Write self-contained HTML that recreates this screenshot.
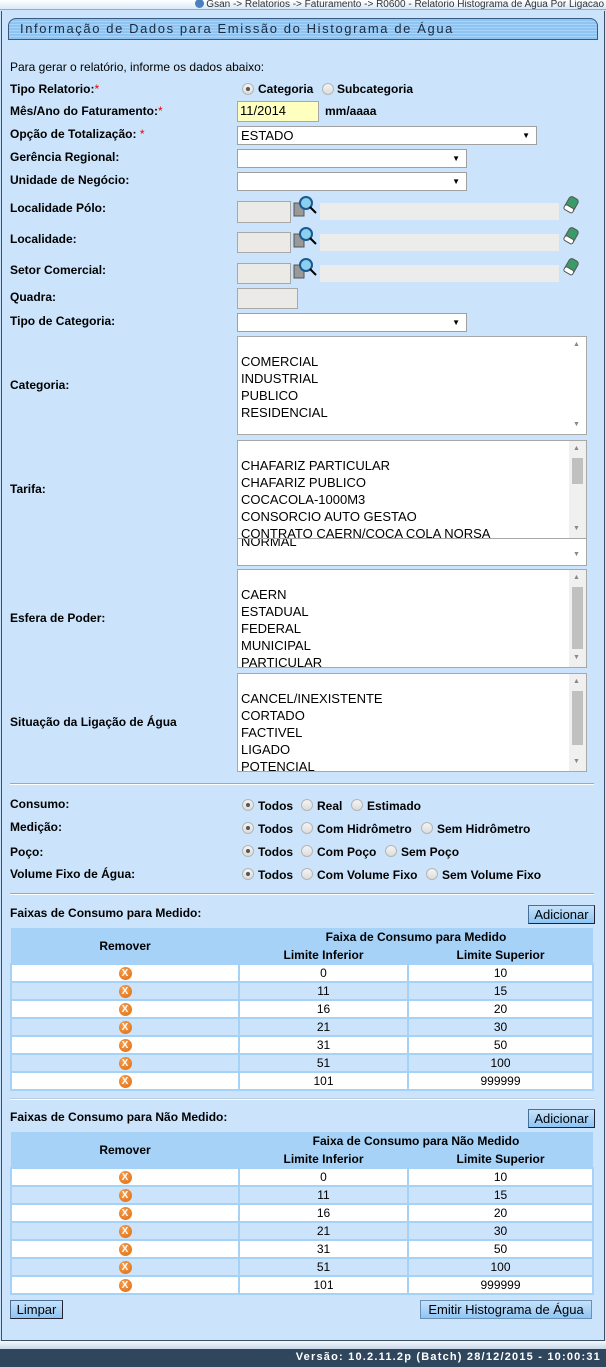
<!DOCTYPE html>
<html><head><meta charset="utf-8"><style>
*{box-sizing:border-box}
body{margin:0;width:606px;height:1367px;position:relative;background:#cbe4fb;font-family:"Liberation Sans",Arial,sans-serif;font-size:12px;color:#000;overflow:hidden}
.a{position:absolute;white-space:nowrap}
.l{position:absolute;left:10px;font-weight:bold;font-size:12px;white-space:nowrap}
.r{color:#e00;font-weight:normal}
.rad{position:absolute;width:12px;height:12px;border-radius:50%;border:1px solid #b5b5b5;background:linear-gradient(#f4f4f4,#dcdcdc)}
.rad.on::after{content:"";position:absolute;left:3px;top:3px;width:4px;height:4px;border-radius:50%;background:#555}
.rt{position:absolute;font-weight:bold;font-size:12px}
.sel{position:absolute;height:19px;background:#fff;border:1px solid #a0a0a0;font-size:13px;padding-left:3px;line-height:17px}
.sel::after{content:"▼";position:absolute;right:6px;top:0;font-size:8px}
.inp{position:absolute;background:#eceae6;border:1px solid #a8a8a8}
.lf{position:absolute;background:#ececec;height:17px}
.lb{position:absolute;left:237px;width:350px;height:99px;background:#fff;border:1px solid #a8a8a8;font-size:13px;overflow:hidden}
.lb div{position:absolute;left:3px}
.sb{position:absolute;right:0;top:0;width:17px;height:100%;background:#f0f0f0}
.sb i{position:absolute;left:3px;width:11px;background:#c0c0c0}
.up,.dn{position:absolute;left:4px;font-size:7px;color:#888}
.hr{position:absolute;left:10px;width:584px;height:2px;border-top:1px solid #9ab;border-bottom:1px solid #fff}
.btn{position:absolute;height:19px;background:linear-gradient(#c6e2fb,#8ec5f4);border:1px solid #4a6f95;border-right-color:#223;border-bottom-color:#223;font-size:13px;text-align:center;line-height:17px}
table{position:absolute;left:10px;width:584px;border-collapse:collapse;font-size:12px}
td{height:18px;text-align:center;border:2px solid #a6d2f8;padding:0;line-height:14px}
th{background:#a6d2f8;font-weight:bold;font-size:12px;padding:0;height:18px}
tr.w td{background:#fff}tr.b td{background:#cbe4fb}
.x{display:inline-block;width:13px;height:13px;border-radius:50%;background:radial-gradient(circle at 40% 35%,#f9a050,#d96a10);color:#fff;font-size:10px;font-weight:bold;line-height:13px;vertical-align:middle}
</style></head><body>
<div class="a" style="left:0;top:0;width:606px;height:10px;background:linear-gradient(#fff,#d8e8f8);border-bottom:1px solid #9ab"></div>
<div class="a" style="right:2px;top:-1px;font-size:10px;color:#333"><span style="display:inline-block;width:9px;height:9px;border-radius:50%;background:#4a7fc0;vertical-align:-1px"></span> Gsan -&gt; Relatorios -&gt; Faturamento -&gt; R0600 - Relatorio Histograma de Agua Por Ligacao</div>
<div class="a" style="left:1px;top:11px;width:604px;height:1330px;border:1px solid #3a5068;border-top:none"></div>
<div class="a" style="left:8px;top:18px;width:590px;height:22px;border:1px solid #3a5a80;border-radius:8px 8px 0 0;background:repeating-linear-gradient(#8ec4f2 0 2px,#a9d3f8 2px 3px);"></div>
<div class="a" style="left:20px;top:21px;font-size:13px;letter-spacing:1.6px;color:#1a2a40">Informação de Dados para Emissão do Histograma de Água</div>

<div class="a" style="left:10px;top:60px;font-size:12px">Para gerar o relatório, informe os dados abaixo:</div>
<div class="l" style="top:82px">Tipo Relatorio:<span class="r">*</span></div>
<div class="rad on" style="left:242px;top:83px"></div><div class="rt" style="left:258px;top:82px">Categoria</div>
<div class="rad" style="left:322px;top:83px"></div><div class="rt" style="left:337px;top:82px">Subcategoria</div>
<div class="l" style="top:104px">Mês/Ano do Faturamento:<span class="r">*</span></div>
<div class="a" style="left:237px;top:101px;width:82px;height:21px;background:#ffffc0;border:1px solid #a8a8a8;font-size:13px;padding:1px 2px">11/2014</div>
<div class="rt" style="left:325px;top:104px">mm/aaaa</div>
<div class="l" style="top:127px">Opção de Totalização: <span class="r">*</span></div>
<div class="sel" style="left:237px;top:126px;width:300px">ESTADO</div>
<div class="l" style="top:150px">Gerência Regional:</div>
<div class="sel" style="left:237px;top:149px;width:230px"></div>
<div class="l" style="top:173px">Unidade de Negócio:</div>
<div class="sel" style="left:237px;top:172px;width:230px"></div>

<div class="l" style="top:201px">Localidade Pólo:</div>
<div class="l" style="top:232px">Localidade:</div>
<div class="l" style="top:263px">Setor Comercial:</div>
<div class="inp" style="left:237px;top:201px;width:54px;height:22px"></div>
<div class="inp" style="left:237px;top:232px;width:54px;height:21px"></div>
<div class="inp" style="left:237px;top:263px;width:54px;height:21px"></div>
<div class="lf" style="left:320px;top:203px;width:239px"></div>
<div class="lf" style="left:320px;top:234px;width:239px"></div>
<div class="lf" style="left:320px;top:265px;width:239px"></div>
<svg class="a" style="left:293px;top:195px" width="25" height="90">
<g id="m"><rect x="1" y="8" width="10" height="13" fill="#999" stroke="#555"/><circle cx="13" cy="8" r="6" fill="#8cd0f0" stroke="#1a5a90" stroke-width="2"/><line x1="17" y1="12" x2="23" y2="18" stroke="#000" stroke-width="2"/></g>
<use href="#m" y="31"/><use href="#m" y="62"/></svg>
<svg class="a" style="left:562px;top:195px" width="20" height="90">
<g id="e" transform="rotate(30 9 10)"><rect x="4" y="2" width="10" height="14" rx="3" fill="#3a9a6a" stroke="#555"/><rect x="4" y="12" width="10" height="5" rx="2" fill="#fff" stroke="#555"/></g>
<use href="#e" y="31"/><use href="#e" y="62"/></svg>
<div class="l" style="top:290px">Quadra:</div>
<div class="inp" style="left:237px;top:288px;width:61px;height:21px"></div>
<div class="l" style="top:314px">Tipo de Categoria:</div>
<div class="sel" style="left:237px;top:313px;width:230px"></div>

<div class="l" style="top:378px">Categoria:</div>
<div class="lb" style="top:336px"><div style="top:17px">COMERCIAL</div><div style="top:34px">INDUSTRIAL</div><div style="top:51px">PUBLICO</div><div style="top:68px">RESIDENCIAL</div><div class="sb" style="left:auto;background:#fff"><span class="up" style="top:4px">▲</span><span class="dn" style="top:84px">▼</span></div></div>

<div class="l" style="top:482px">Tarifa:</div>
<div class="lb" style="top:538px;height:28px"><div style="top:-5px">NORMAL</div><div class="sb" style="left:auto;background:#fff"><span class="dn" style="top:12px">▼</span></div></div>
<div class="lb" style="top:440px;height:99px"><div style="top:17px">CHAFARIZ PARTICULAR</div><div style="top:34px">CHAFARIZ PUBLICO</div><div style="top:51px">COCACOLA-1000M3</div><div style="top:68px">CONSORCIO AUTO GESTAO</div><div style="top:85px">CONTRATO CAERN/COCA COLA NORSA</div><div class="sb" style="left:auto"><span class="up" style="top:4px">▲</span><i style="top:17px;height:26px"></i><span class="dn" style="top:84px">▼</span></div></div>

<div class="l" style="top:611px">Esfera de Poder:</div>
<div class="lb" style="top:569px"><div style="top:17px">CAERN</div><div style="top:34px">ESTADUAL</div><div style="top:51px">FEDERAL</div><div style="top:68px">MUNICIPAL</div><div style="top:85px">PARTICULAR</div><div class="sb" style="left:auto"><span class="up" style="top:4px">▲</span><i style="top:17px;height:62px"></i><span class="dn" style="top:84px">▼</span></div></div>

<div class="l" style="top:715px">Situação da Ligação de Água</div>
<div class="lb" style="top:673px"><div style="top:17px">CANCEL/INEXISTENTE</div><div style="top:34px">CORTADO</div><div style="top:51px">FACTIVEL</div><div style="top:68px">LIGADO</div><div style="top:85px">POTENCIAL</div><div class="sb" style="left:auto"><span class="up" style="top:4px">▲</span><i style="top:17px;height:54px"></i><span class="dn" style="top:84px">▼</span></div></div>

<div class="hr" style="top:783px"></div>
<div class="l" style="top:797px">Consumo:</div>
<div class="l" style="top:820px">Medição:</div>
<div class="l" style="top:845px">Poço:</div>
<div class="l" style="top:867px">Volume Fixo de Água:</div>
<div class="rad on" style="left:242px;top:799px"></div><div class="rt" style="left:258px;top:799px">Todos</div>
<div class="rad" style="left:301px;top:799px"></div><div class="rt" style="left:317px;top:799px">Real</div>
<div class="rad" style="left:351px;top:799px"></div><div class="rt" style="left:367px;top:799px">Estimado</div>
<div class="rad on" style="left:242px;top:822px"></div><div class="rt" style="left:258px;top:822px">Todos</div>
<div class="rad" style="left:301px;top:822px"></div><div class="rt" style="left:317px;top:822px">Com Hidrômetro</div>
<div class="rad" style="left:421px;top:822px"></div><div class="rt" style="left:437px;top:822px">Sem Hidrômetro</div>
<div class="rad on" style="left:242px;top:845px"></div><div class="rt" style="left:258px;top:845px">Todos</div>
<div class="rad" style="left:301px;top:845px"></div><div class="rt" style="left:317px;top:845px">Com Poço</div>
<div class="rad" style="left:385px;top:845px"></div><div class="rt" style="left:401px;top:845px">Sem Poço</div>
<div class="rad on" style="left:242px;top:868px"></div><div class="rt" style="left:258px;top:868px">Todos</div>
<div class="rad" style="left:301px;top:868px"></div><div class="rt" style="left:317px;top:868px">Com Volume Fixo</div>
<div class="rad" style="left:426px;top:868px"></div><div class="rt" style="left:442px;top:868px">Sem Volume Fixo</div>
<div class="hr" style="top:893px"></div>

<div class="l" style="top:906px">Faixas de Consumo para Medido:</div>
<div class="btn" style="left:528px;top:905px;width:67px">Adicionar</div>
<table style="top:928px">
<tr><th rowspan="2" style="width:228px">Remover</th><th colspan="2">Faixa de Consumo para Medido</th></tr>
<tr><th style="width:169px">Limite Inferior</th><th>Limite Superior</th></tr>
<tr class="w"><td><span class="x">X</span></td><td>0</td><td>10</td></tr>
<tr class="b"><td><span class="x">X</span></td><td>11</td><td>15</td></tr>
<tr class="w"><td><span class="x">X</span></td><td>16</td><td>20</td></tr>
<tr class="b"><td><span class="x">X</span></td><td>21</td><td>30</td></tr>
<tr class="w"><td><span class="x">X</span></td><td>31</td><td>50</td></tr>
<tr class="b"><td><span class="x">X</span></td><td>51</td><td>100</td></tr>
<tr class="w"><td><span class="x">X</span></td><td>101</td><td>999999</td></tr>
</table>
<div class="hr" style="top:1098px;border-top-color:#bcd"></div>

<div class="l" style="top:1110px">Faixas de Consumo para Não Medido:</div>
<div class="btn" style="left:528px;top:1109px;width:67px">Adicionar</div>
<table style="top:1132px">
<tr><th rowspan="2" style="width:228px">Remover</th><th colspan="2">Faixa de Consumo para Não Medido</th></tr>
<tr><th style="width:169px">Limite Inferior</th><th>Limite Superior</th></tr>
<tr class="w"><td><span class="x">X</span></td><td>0</td><td>10</td></tr>
<tr class="b"><td><span class="x">X</span></td><td>11</td><td>15</td></tr>
<tr class="w"><td><span class="x">X</span></td><td>16</td><td>20</td></tr>
<tr class="b"><td><span class="x">X</span></td><td>21</td><td>30</td></tr>
<tr class="w"><td><span class="x">X</span></td><td>31</td><td>50</td></tr>
<tr class="b"><td><span class="x">X</span></td><td>51</td><td>100</td></tr>
<tr class="w"><td><span class="x">X</span></td><td>101</td><td>999999</td></tr>
</table>

<div class="btn" style="left:10px;top:1300px;width:53px">Limpar</div>
<div class="btn" style="left:420px;top:1300px;width:172px;border-color:#6a90b8">Emitir Histograma de Água</div>

<div class="a" style="left:0;top:1341px;width:606px;height:8px;background:linear-gradient(#f4f8fc,#c8d8e8)"></div>
<div class="a" style="left:0;top:1349px;width:606px;height:18px;background:#2f465c"></div>
<div class="a" style="right:5px;top:1351px;color:#fff;font-weight:bold;font-size:11px;letter-spacing:1.2px">Versão: 10.2.11.2p (Batch) 28/12/2015 - 10:00:31</div>
</body></html>
